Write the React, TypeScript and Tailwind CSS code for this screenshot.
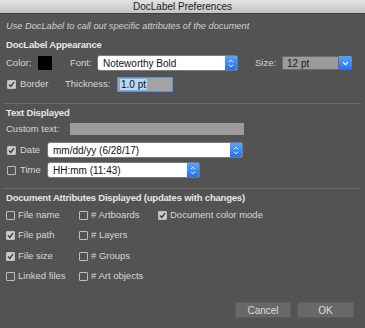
const font = "font-['Liberation_Sans',Arial,sans-serif]";

function Check({ on }: { on?: boolean }) {
  return (
    <span
      className={`w-[9px] h-[9px] shrink-0 flex items-center justify-center rounded-[1px] ${
        on ? "bg-[#c9c9c9] border border-[#bdbdbd]" : "border border-[#bdbdbd] bg-transparent"
      }`}
    >
      {on && (
        <svg width="7" height="7" viewBox="0 0 7 7">
          <path d="M1 3.6 L2.8 5.4 L6 1.2" stroke="#3a3a3a" strokeWidth="1.4" fill="none" />
        </svg>
      )}
    </span>
  );
}

function UpDown() {
  return (
    <span className="w-[12px] self-stretch flex items-center justify-center bg-gradient-to-b from-[#5aa2fb] to-[#1f73f0] rounded-r-[2px]">
      <svg width="6" height="9" viewBox="0 0 6 9">
        <path d="M1 3.2 L3 1.2 L5 3.2 M1 5.8 L3 7.8 L5 5.8" stroke="#fff" strokeWidth="1" fill="none" />
      </svg>
    </span>
  );
}

function Select({ value, width }: { value: string; width: string }) {
  return (
    <div className={`${width} h-full flex bg-white rounded-[2px] shadow-[0_0_0_1px_#7a7a7a]`}>
      <span className="flex-1 flex items-center pl-[5px] text-[10px] text-[#111]">{value}</span>
      <UpDown />
    </div>
  );
}

const ATTRS: [string, boolean][][] = [
  [["File name", false], ["# Artboards", false], ["Document color mode", true]],
  [["File path", true], ["# Layers", false]],
  [["File size", true], ["# Groups", false]],
  [["Linked files", false], ["# Art objects", false]],
];

const heading = "h-[14px] flex items-center font-bold text-[#e6e6e6] text-[9.5px] tracking-[-0.2px]";

export default function App() {
  return (
    <div className={`w-[365px] h-[328px] bg-[#535353] text-[#d6d6d6] text-[9.5px] flex flex-col overflow-hidden ${font}`}>
      <div className="h-[14px] shrink-0 flex items-center justify-center bg-gradient-to-b from-[#e3e3e3] to-[#c4c4c4] border-b border-[#3d3d3d] text-[10px] text-[#222]">
        DocLabel Preferences
      </div>

      <div className="px-[6px] flex flex-col">
        <div className="mt-[6px] h-[14px] flex items-center italic text-[#cfcfcf] text-[9.25px]">
          Use DocLabel to call out specific attributes of the document
        </div>
        <div className={`mt-[4px] ${heading}`}>DocLabel Appearance</div>

        <div className="mt-[4px] h-[14px] flex items-center">
          <span className="w-[32px]">Color:</span>
          <span className="w-[14px] h-[14px] bg-black" />
          <span className="ml-[18px] w-[28px]">Font:</span>
          <Select value="Noteworthy Bold" width="w-[139px]" />
          <span className="ml-[18px] w-[27px]">Size:</span>
          <div className="w-[70px] h-full flex">
            <span className="flex-1 flex items-center pl-[4px] bg-[#9b9b9b] border border-[#6b6b6b] text-[#1a1a1a] text-[10px]">12 pt</span>
            <span className="w-[13px] flex items-center justify-center bg-gradient-to-b from-[#5aa2fb] to-[#1f73f0] rounded-r-[2px]">
              <svg width="7" height="5" viewBox="0 0 7 5">
                <path d="M1 1.2 L3.5 3.7 L6 1.2" stroke="#fff" strokeWidth="1.2" fill="none" />
              </svg>
            </span>
          </div>
        </div>

        <div className="mt-[7px] h-[15px] flex items-center">
          <span className="ml-[1px]"><Check on /></span>
          <span className="ml-[4px] w-[45px]">Border</span>
          <span className="w-[52px]">Thickness:</span>
          <div className="w-[56px] h-full flex items-center bg-[#a3a3a3] border border-[#4f95e8] pl-[2px]">
            <span className="bg-[#b6d6fb] text-[#111] text-[10px] px-[1px] leading-[11px]">1.0 pt</span>
          </div>
        </div>
      </div>

      <div className="mt-[11px] mx-[4px] h-px bg-[#6c6c6c]" />

      <div className="px-[6px] flex flex-col">
        <div className={`mt-[2px] ${heading}`}>Text Displayed</div>
        <div className="mt-[3px] h-[12px] flex items-center">
          <span className="w-[64px]">Custom text:</span>
          <span className="w-[174px] h-full bg-[#9b9b9b]" />
        </div>
        <div className="mt-[8px] h-[14px] flex items-center">
          <span className="ml-[1px]"><Check on /></span>
          <span className="ml-[4px] w-[28px]">Date</span>
          <Select value="mm/dd/yy (6/28/17)" width="w-[194px]" />
        </div>
        <div className="mt-[6px] h-[14px] flex items-center">
          <span className="ml-[1px]"><Check /></span>
          <span className="ml-[4px] w-[28px]">Time</span>
          <Select value="HH:mm (11:43)" width="w-[151px]" />
        </div>
      </div>

      <div className="mt-[11px] mx-[4px] h-px bg-[#6c6c6c]" />

      <div className="px-[6px] flex flex-col">
        <div className={`mt-[2px] ${heading}`}>
          Document Attributes Displayed (updates with changes)
        </div>
        {ATTRS.map((row, i) => (
          <div key={i} className={`${i === 0 ? "mt-[3px]" : i === 2 ? "mt-[7px]" : "mt-[6px]"} h-[14px] flex items-center`}>
            {row.map(([label, on], j) => (
              <div key={label} className={`flex items-center ${j === 0 ? "w-[73px]" : j === 1 ? "w-[79px]" : ""}`}>
                <Check on={on} />
                <span className="ml-[3px]">{label}</span>
              </div>
            ))}
          </div>
        ))}

        <div className="mt-[19px] flex justify-end gap-[6px] pr-[5px]">
          <button className="w-[56px] h-[16px] bg-[#686868] border border-[#5d5d5d] text-[#dcdcdc] text-[10px]">Cancel</button>
          <button className="w-[57px] h-[16px] bg-[#686868] border border-[#5d5d5d] text-[#dcdcdc] text-[10px]">OK</button>
        </div>
      </div>
    </div>
  );
}
